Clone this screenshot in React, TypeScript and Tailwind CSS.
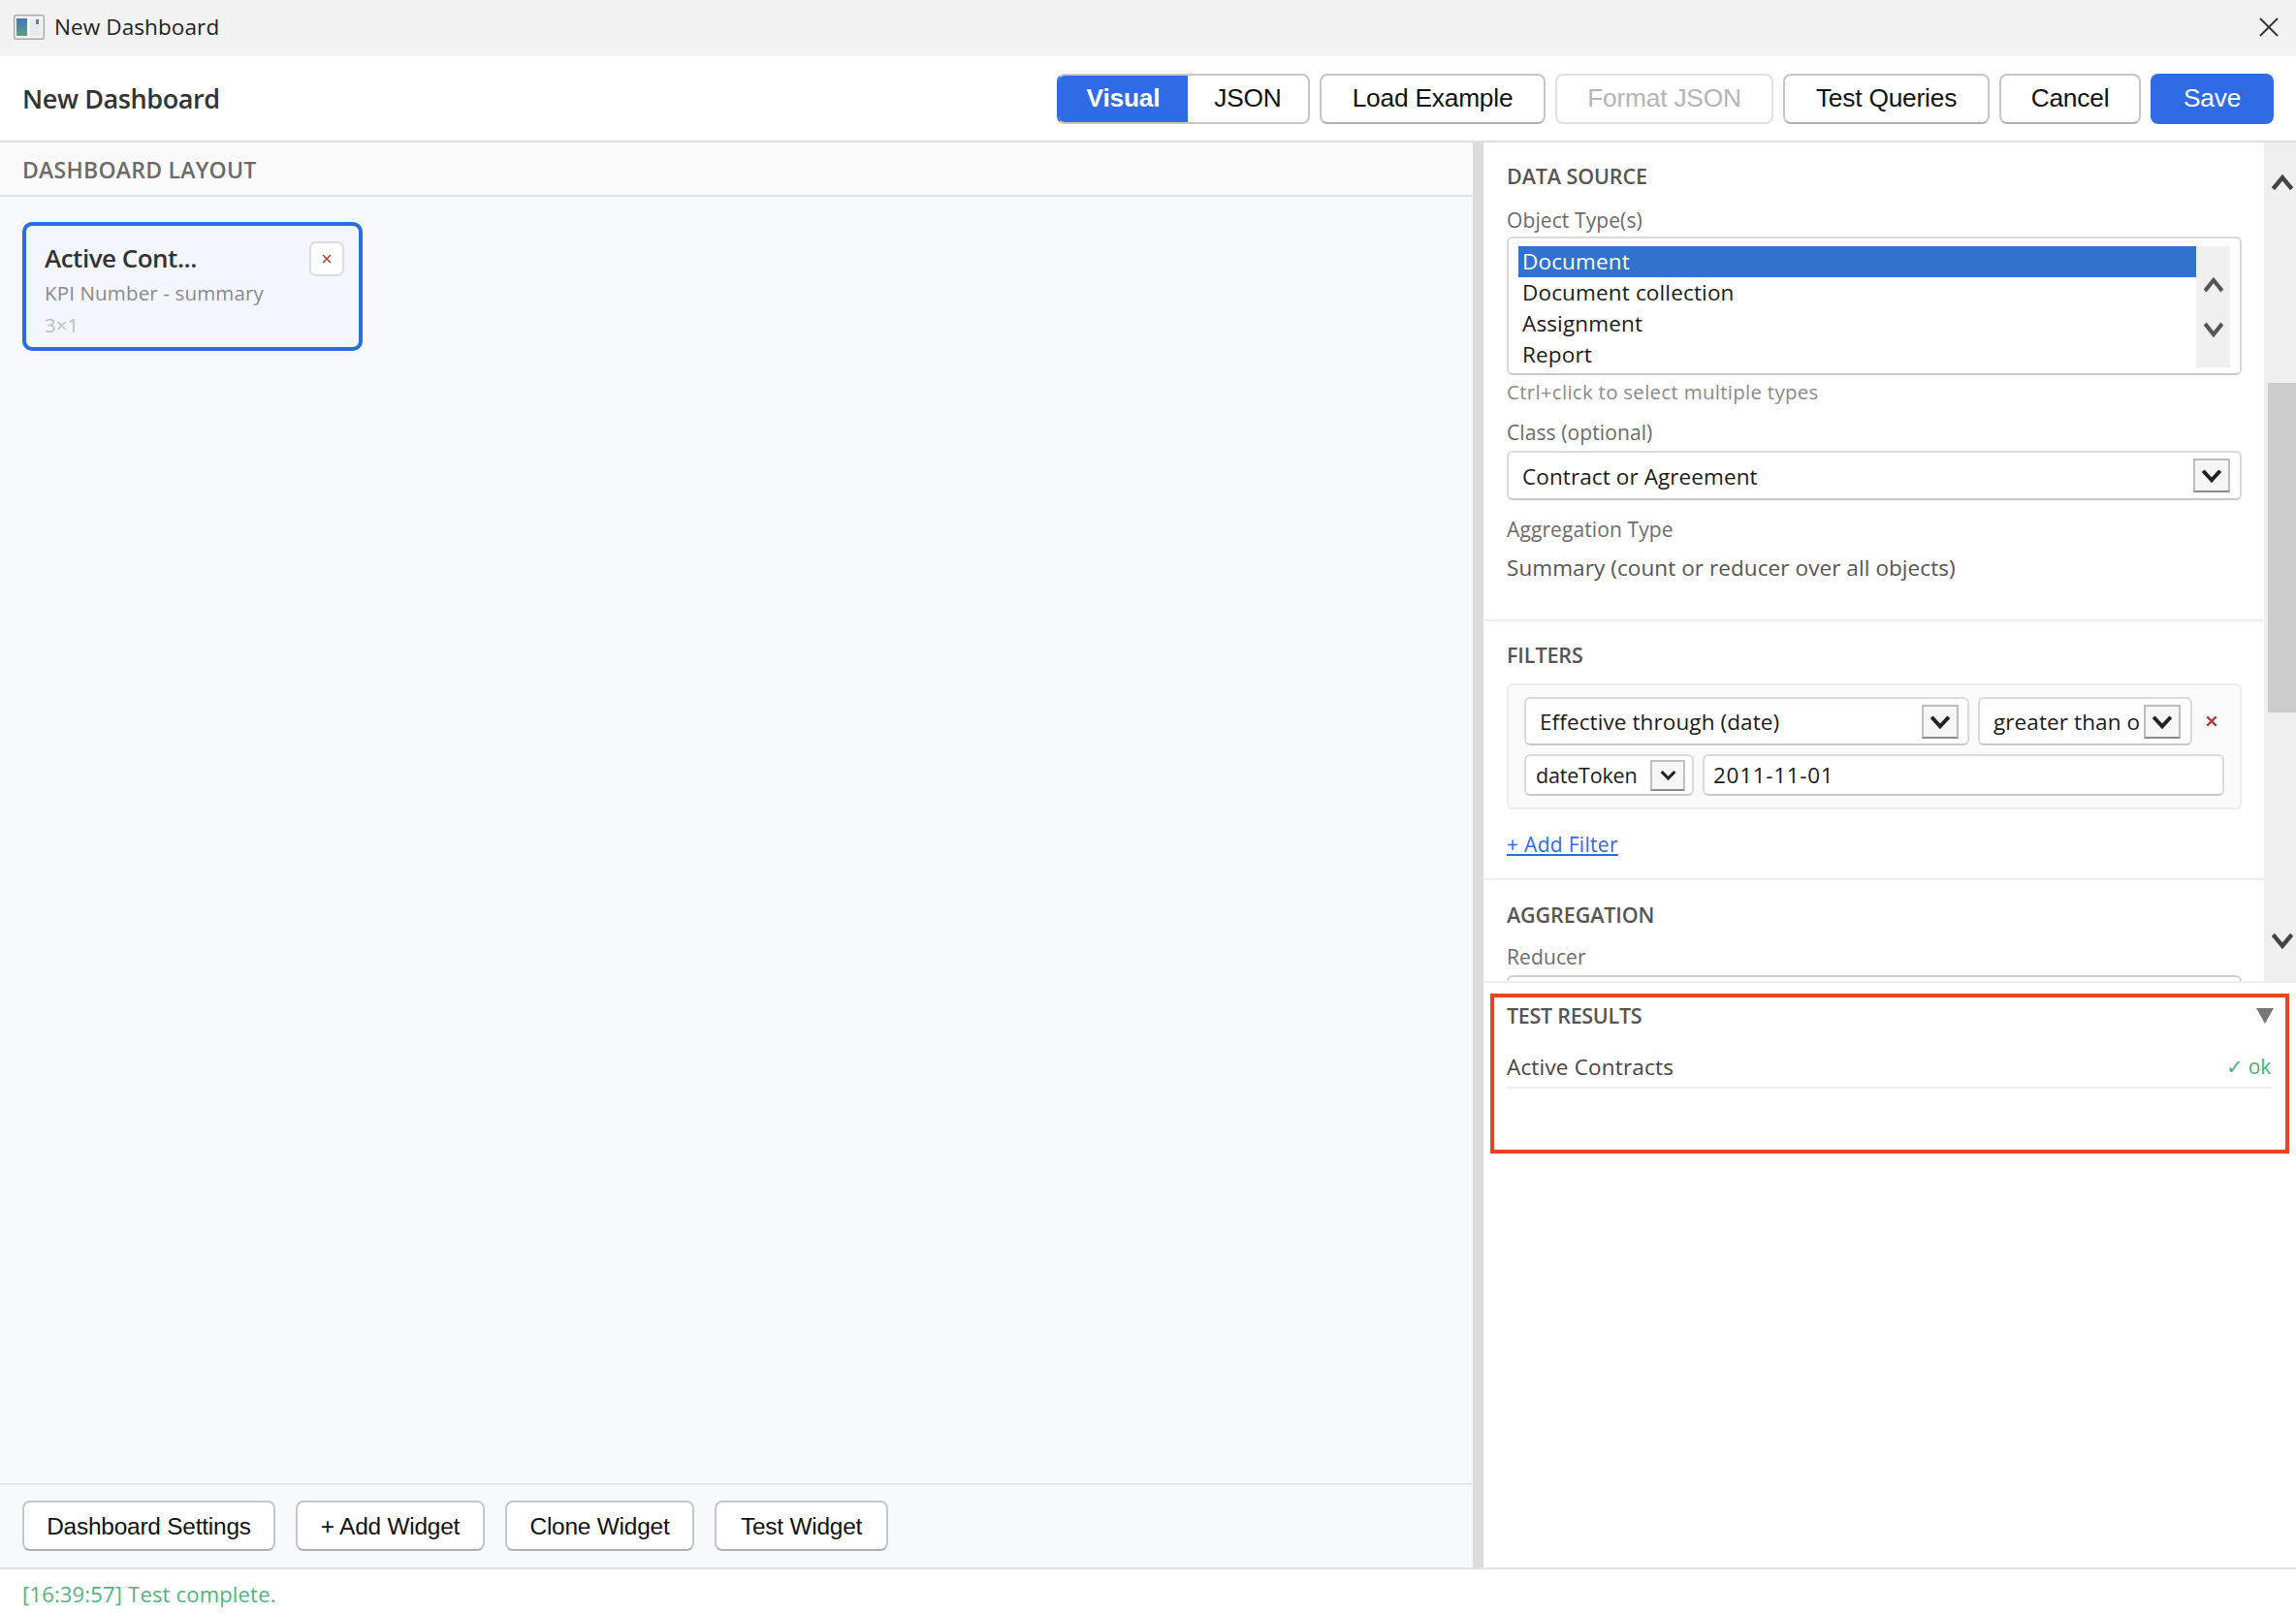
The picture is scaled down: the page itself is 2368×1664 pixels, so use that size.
import React from "react";

const FONT = "font-['Open_Sans','Noto_Sans',sans-serif]";
const ARIAL = "font-['Liberation_Sans',Arial,sans-serif]";

function Chevron({ dir = "down", className = "" }: { dir?: "up" | "down"; className?: string }) {
  return (
    <svg viewBox="0 0 20 14" preserveAspectRatio="none" className={className} fill="none" stroke="currentColor" strokeWidth="3.6" strokeLinecap="butt" strokeLinejoin="miter">
      {dir === "down" ? <path d="M2 2.5 L10 11.5 L18 2.5" /> : <path d="M2 11.5 L10 2.5 L18 11.5" />}
    </svg>
  );
}

function Btn({ children, className = "", disabled = false, small = false }: { children: React.ReactNode; className?: string; disabled?: boolean; small?: boolean }) {
  return (
    <div
      className={`${ARIAL} flex h-[52px] items-center justify-center rounded-[8px] border-2 bg-white ${small ? "pt-[3px] text-[24.4px]" : "text-[26.3px]"} tracking-[-0.2px] ${
        disabled ? "border-[#e0e0e0] text-[#b4b4b4]" : "border-[#c6c6c6] border-b-[#b0b0b0] text-[#111]"
      } ${className}`}
    >
      {children}
    </div>
  );
}

function SelectBox({
  text,
  className = "",
  btn = "h-[35px] w-[38px]",
  textClass = "pl-[14px] text-[22.5px] tracking-[0.1px]",
  icon = "h-[15px] w-[22px]",
}: {
  text: string;
  className?: string;
  btn?: string;
  textClass?: string;
  icon?: string;
}) {
  return (
    <div className={`flex items-center justify-between rounded-[6px] border-2 border-[#dadada] border-b-[#c8c8c8] bg-white ${className}`}>
      <span className={`overflow-hidden whitespace-nowrap pt-[2px] text-[#1a1a1a] ${textClass}`}>{text}</span>
      <div className={`flex shrink-0 items-center justify-center border-2 border-[#bdbdbd] border-b-[#8a8a8a] bg-[#f6f6f6] text-[#222] ${btn}`}>
        <Chevron className={icon} />
      </div>
    </div>
  );
}

function Heading({ children, className = "" }: { children: React.ReactNode; className?: string }) {
  return <div className={`flex h-[28px] items-center text-[21.5px] font-semibold tracking-[-0.1px] text-[#555] ${className}`}>{children}</div>;
}

function Label({ children, className = "" }: { children: React.ReactNode; className?: string }) {
  return <div className={`flex h-[28px] items-center text-[21px] tracking-[0.1px] text-[#6b6b6b] ${className}`}>{children}</div>;
}

export default function App() {
  return (
    <div className={`${FONT} relative flex h-[1664px] w-[2368px] flex-col overflow-hidden bg-white`}>
      {/* Title bar */}
      <div className="flex h-[58px] shrink-0 items-center bg-[#f2f2f2] pb-[2px] pl-[14px] pr-[18px]">
        <svg viewBox="0 0 32 26" className="h-[26px] w-[32px]">
          <defs>
            <linearGradient id="g" x1="0" y1="0" x2="0" y2="1">
              <stop offset="0" stopColor="#3f78b8" />
              <stop offset="1" stopColor="#5f9f7f" />
            </linearGradient>
          </defs>
          <rect x="0.7" y="0.7" width="30.6" height="24.6" rx="1.5" fill="#f4f4f4" stroke="#a8a8a8" strokeWidth="1.4" />
          <rect x="3" y="4" width="11" height="18" fill="url(#g)" />
          <rect x="17" y="4" width="11" height="18" fill="#e8eaec" />
          <rect x="23" y="5" width="3" height="5" fill="#5d7f9a" />
        </svg>
        <span className="ml-[10px] text-[22.5px] tracking-[0.1px] text-[#222]">New Dashboard</span>
        <svg viewBox="0 0 20 20" className="ml-auto h-[20px] w-[20px]" stroke="#333" strokeWidth="1.8">
          <path d="M1 1 L19 19 M19 1 L1 19" />
        </svg>
      </div>

      {/* Header */}
      <div className="flex h-[89px] shrink-0 items-center border-b-2 border-[#dedede] bg-white pl-[23px] pr-[23px]">
        <span className="pt-[2px] text-[27px] font-semibold tracking-[-0.4px] text-[#333]">New Dashboard</span>
        <div className="ml-auto flex items-center gap-[10px]">
          <div className={`${ARIAL} flex h-[52px] w-[261px] overflow-hidden rounded-[8px] border-2 border-[#c6c6c6] border-l-[#2f6be4] bg-white text-[26.3px] tracking-[-0.2px]`}>
            <div className="flex w-[133px] items-center justify-center bg-[#2f6be4] font-bold text-white">Visual</div>
            <div className="flex flex-1 items-center justify-center text-[#111]">JSON</div>
          </div>
          <Btn className="w-[233px]">Load Example</Btn>
          <Btn className="w-[225px]" disabled>Format JSON</Btn>
          <Btn className="w-[213px]">Test Queries</Btn>
          <Btn className="w-[146px]">Cancel</Btn>
          <div className={`${ARIAL} flex h-[52px] w-[127px] items-center justify-center rounded-[8px] bg-[#2f6be4] text-[26.3px] tracking-[-0.2px] text-white`}>Save</div>
        </div>
      </div>

      {/* Body */}
      <div className="flex min-h-0 flex-1">
        {/* Left */}
        <div className="flex w-[1519px] shrink-0 flex-col bg-[#f8f9fb]">
          <div className="flex h-[56px] shrink-0 items-center border-b-2 border-[#e2e2e2] bg-[#fafafa] pl-[23px] pt-[2px] text-[23px] font-semibold tracking-[0.25px] text-[#6b6b6b]">
            DASHBOARD LAYOUT
          </div>
          <div className="min-h-0 flex-1 pl-[23px] pt-[26px]">
            <div className="relative h-[133px] w-[351px] rounded-[10px] border-[4px] border-[#2c6be0] bg-[#f3f6fc] pl-[19px]">
              <div className="mt-[15px] flex h-[36px] items-center text-[26px] font-semibold tracking-[-0.5px] text-[#333]">Active Cont...</div>
              <div className="mt-[3px] flex h-[30px] items-center text-[20.5px] tracking-[0.15px] text-[#8a8a8a]">KPI Number - summary</div>
              <div className="mt-[3px] flex h-[30px] items-center text-[20.5px] text-[#bdbdbd]">3×1</div>
              <div className="absolute right-[15px] top-[16px] flex h-[36px] w-[36px] items-center justify-center rounded-[7px] border-2 border-[#dcdcdc] bg-white text-[#b43c3c]">
                <svg viewBox="0 0 12 12" className="h-[12px] w-[12px]" stroke="currentColor" strokeWidth="1.6"><path d="M2 2 L10 10 M10 2 L2 10" /></svg>
              </div>
            </div>
          </div>
          <div className="flex h-[87px] shrink-0 items-center gap-[21px] border-t-2 border-[#e6e6e6] pb-[2px] pl-[23px]">
            <Btn small className="w-[261px]">Dashboard Settings</Btn>
            <Btn small className="w-[195px]">+ Add Widget</Btn>
            <Btn small className="w-[195px]">Clone Widget</Btn>
            <Btn small className="w-[179px]">Test Widget</Btn>
          </div>
        </div>
        {/* Splitter */}
        <div className="w-[11px] shrink-0 bg-[#dcdcdc]" />
        {/* Right */}
        <div className="flex min-w-0 flex-1 flex-col">
          <div className="flex h-[867px] shrink-0 overflow-hidden border-b-2 border-[#eeeeee]">
            <div className="min-w-0 flex-1 overflow-hidden">
              {/* Data source */}
              <div className="border-b-2 border-[#eeeeee] pb-[38px] pl-[24px] pr-[23px] pt-[21px]">
                <Heading>DATA SOURCE</Heading>
                <Label className="mt-[18px]">Object Type(s)</Label>
                <div className="mt-[2px] flex h-[143px] rounded-[6px] border-2 border-[#d8d8d8] border-b-[#c8c8c8] bg-white pb-[6px] pl-[10px] pr-[10px] pt-[8px]">
                  <div className="min-w-0 flex-1 text-[22.5px] tracking-[0.15px] text-[#1a1a1a]">
                    <div className="flex h-[32px] items-center bg-[#3272cf] pl-[4px] text-white">Document</div>
                    <div className="flex h-[32px] items-center pl-[4px]">Document collection</div>
                    <div className="flex h-[32px] items-center pl-[4px]">Assignment</div>
                    <div className="flex h-[32px] items-center pl-[4px]">Report</div>
                  </div>
                  <div className="flex w-[35px] shrink-0 flex-col items-center bg-[#f0f0f0] pt-[32px] text-[#555]">
                    <Chevron dir="up" className="h-[17px] w-[22px]" />
                    <Chevron className="mt-[28px] h-[17px] w-[22px]" />
                  </div>
                </div>
                <div className="mt-[4px] flex h-[26px] items-center text-[20.5px] tracking-[0.27px] text-[#8a8a8a]">Ctrl+click to select multiple types</div>
                <Label className="mt-[16px]">Class (optional)</Label>
                <SelectBox text="Contract or Agreement" className="mt-[4px] h-[51px] pr-[10px]" />
                <Label className="mt-[17px]">Aggregation Type</Label>
                <div className="mt-[10px] flex h-[30px] items-center text-[22.5px] tracking-[0.08px] text-[#555]">Summary (count or reducer over all objects)</div>
              </div>
              {/* Filters */}
              <div className="border-b-2 border-[#eeeeee] pb-[20px] pl-[24px] pr-[23px] pt-[21px]">
                <Heading>FILTERS</Heading>
                <div className="mt-[15px] h-[130px] rounded-[6px] border-2 border-[#ececec] bg-[#fafafa] pl-[16px] pt-[12px]">
                  <div className="flex items-center gap-[9px]">
                    <SelectBox text="Effective through (date)" className="h-[50px] w-[459px] pr-[9px]" />
                    <SelectBox text="greater than o" className="h-[50px] w-[221px] pr-[10px]" />
                    <svg viewBox="0 0 12 12" className="ml-[4px] h-[14px] w-[14px]" stroke="#b43c3c" strokeWidth="2"><path d="M2 2 L10 10 M10 2 L2 10" /></svg>
                  </div>
                  <div className="mt-[9px] flex items-center gap-[9px]">
                    <SelectBox
                      text="dateToken"
                      className="h-[43px] w-[175px] pr-[7px]"
                      textClass="pl-[10px] text-[21.5px] tracking-[-0.2px]"
                      btn="h-[32px] w-[36px]"
                      icon="h-[11px] w-[17px]"
                    />
                    <div className="flex h-[43px] w-[538px] items-center rounded-[6px] border-2 border-[#dadada] border-b-[#c8c8c8] bg-white pl-[9px] text-[22.5px] tracking-[0.7px] text-[#1a1a1a]">2011-11-01</div>
                  </div>
                </div>
                <div className="mt-[23px] flex h-[28px] items-center text-[21px] tracking-[0.3px] text-[#2f6be4] underline">+ Add Filter</div>
              </div>
              {/* Aggregation */}
              <div className="pl-[24px] pr-[23px] pt-[22px]">
                <Heading>AGGREGATION</Heading>
                <Label className="mt-[16px]">Reducer</Label>
                <div className="mt-[4px] h-[50px] rounded-[6px] border-2 border-[#d0d0d0] bg-white" />
              </div>
            </div>
            {/* Scrollbar */}
            <div className="relative flex w-[33px] shrink-0 flex-col items-center bg-[#f0f0f0] pl-[4px] text-[#444]">
              <Chevron dir="up" className="mt-[33px] h-[18px] w-[24px]" />
              <div className="mt-[197px] h-[340px] w-full bg-[#cdcdcd]" />
              <Chevron className="mt-[226px] h-[18px] w-[24px]" />
            </div>
          </div>
          {/* Test results */}
          <div className="min-h-0 flex-1 bg-white pl-[24px] pr-[26px] pt-[20px]">
            <div className="flex h-[28px] items-center justify-between">
              <span className="text-[21.5px] font-semibold tracking-[-0.3px] text-[#555]">TEST RESULTS</span>
              <svg viewBox="0 0 18 16" className="mr-[-3px] h-[16px] w-[18px]" fill="#777"><path d="M0 0 H18 L9 16 Z" /></svg>
            </div>
            <div className="mt-[24px] flex h-[30px] items-center justify-between text-[22.5px] tracking-[0.18px] text-[#444]">
              <span>Active Contracts</span>
              <span className="text-[21px] tracking-[-0.2px] text-[#4caf78]">✓ ok</span>
            </div>
            <div className="mt-[5px] h-[2px] bg-[#eeeeee]" />
          </div>
        </div>
      </div>

      {/* Status bar */}
      <div className="flex h-[47px] shrink-0 items-center border-t-2 border-[#e2e2e2] bg-white pl-[23px] pt-[5px] text-[22px] tracking-[0.18px] text-[#55b27d]">
        [16:39:57] Test complete.
      </div>

      {/* Annotation frame */}
      <div className="absolute left-[1537px] top-[1025px] h-[165px] w-[824px] border-[4px] border-[#ea4224]" />
    </div>
  );
}
